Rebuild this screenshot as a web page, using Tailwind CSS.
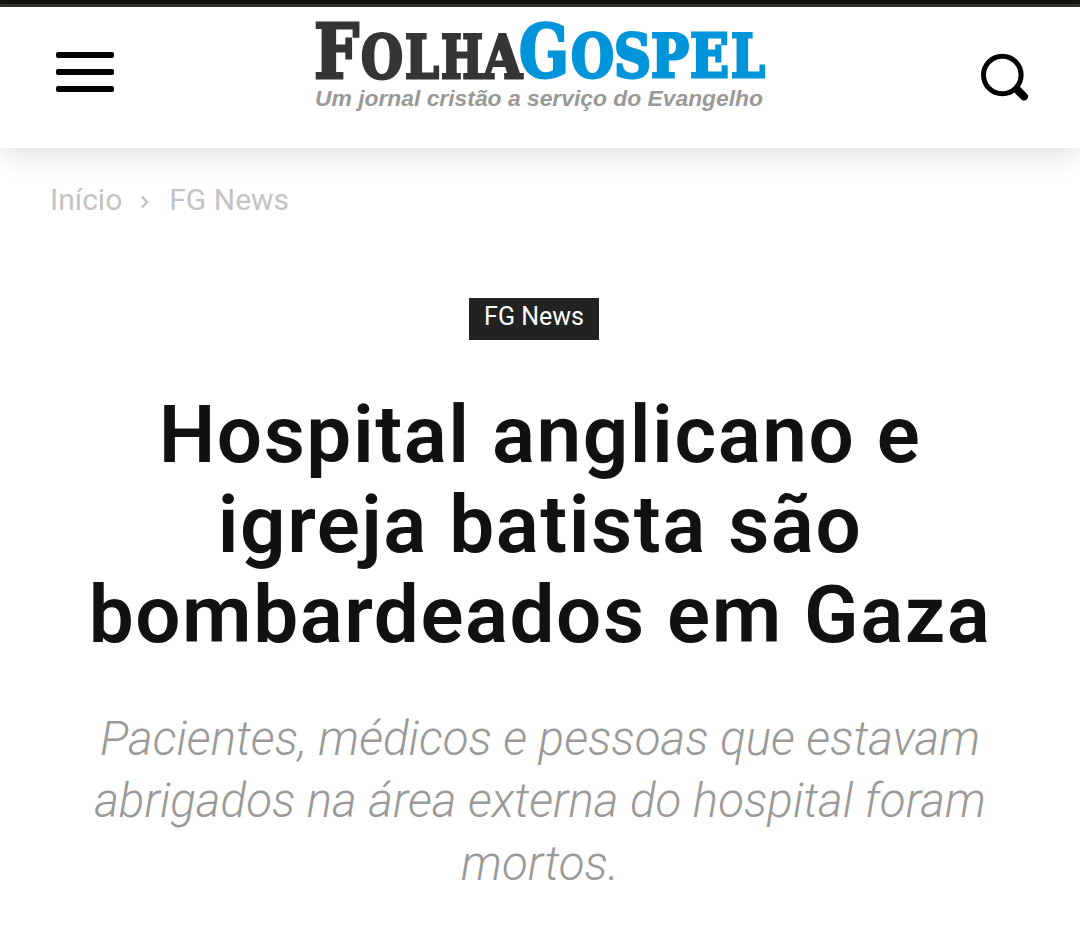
<!DOCTYPE html>
<html lang="pt-BR">
  <head>
    <meta charset="UTF-8" />
    <meta name="viewport" content="width=device-width, initial-scale=1.0" />
    <title>Folha Gospel</title>
    <script src="https://cdn.jsdelivr.net/npm/@tailwindcss/browser@4"></script>
  </head>
  <body class="min-h-screen overflow-hidden bg-white font-['Roboto',sans-serif]">
    <div class="h-[7px] border-b-3 border-[#33332b] bg-[#11150d]"></div>

    <header class="flex h-[141px] items-start justify-between bg-white pr-[51px] pl-14 shadow-[0_12px_24px_-2px_rgba(0,0,0,0.11)]">
      <button class="mt-[45px] flex h-10 w-[58px] flex-col justify-between" aria-label="Menu">
        <span class="h-[6px] w-full rounded-[2px] bg-black"></span>
        <span class="h-[6px] w-full rounded-[2px] bg-black"></span>
        <span class="h-[6px] w-full rounded-[2px] bg-black"></span>
      </button>

      <a href="#" class="-ml-[14px]" aria-label="Folha Gospel">
        <svg class="overflow-visible" width="460" height="110" viewBox="310 7 460 110">
          <g class="font-['DejaVu_Serif',serif] font-bold" fill="#373435" stroke="#373435" stroke-width="3">
            <text x="314" y="77.500" font-size="75" textLength="45" lengthAdjust="spacingAndGlyphs">F</text>
            <text y="77.500" font-size="60">
              <tspan x="361" textLength="42" lengthAdjust="spacingAndGlyphs">O</tspan>
              <tspan x="405" textLength="34" lengthAdjust="spacingAndGlyphs">L</tspan>
              <tspan x="441" textLength="42" lengthAdjust="spacingAndGlyphs">H</tspan>
              <tspan x="483" textLength="39" lengthAdjust="spacingAndGlyphs">A</tspan>
            </text>
          </g>
          <g class="font-['DejaVu_Serif',serif] font-bold" fill="#0095da" stroke="#0095da" stroke-width="3">
            <text x="519" y="77" font-size="73" textLength="50" lengthAdjust="spacingAndGlyphs">G</text>
            <text y="76.500" font-size="59">
              <tspan x="571" textLength="43" lengthAdjust="spacingAndGlyphs">O</tspan>
              <tspan x="614" textLength="37" lengthAdjust="spacingAndGlyphs">S</tspan>
              <tspan x="651" textLength="38" lengthAdjust="spacingAndGlyphs">P</tspan>
              <tspan x="690" textLength="39" lengthAdjust="spacingAndGlyphs">E</tspan>
              <tspan x="731" textLength="34" lengthAdjust="spacingAndGlyphs">L</tspan>
            </text>
          </g>
          <text x="315" y="105.500" font-size="22" textLength="448" lengthAdjust="spacingAndGlyphs" fill="#999" class="font-['Liberation_Sans',sans-serif] font-bold italic">Um jornal cristão a serviço do Evangelho</text>
        </svg>
      </a>

      <button class="mt-[46px]" aria-label="Buscar">
        <svg width="49" height="50" viewBox="980 53 49 50" fill="none" stroke="#000" stroke-linecap="round">
          <circle cx="1002.300" cy="75" r="18.800" stroke-width="5" />
          <path d="M1017.500 90l6.500 6.500" stroke-width="8" />
        </svg>
      </button>
    </header>

    <nav class="mt-[30px] flex h-[42px] items-center pl-[50px] text-[30px] text-[#c3c3c3]">
      <a href="#">Início</a>
      <svg class="mt-1.5 mr-[19px] ml-[18px]" width="10" height="14" viewBox="0 0 10 14" fill="none" stroke="currentColor" stroke-width="2.500">
        <path d="M2 1.500L7 7L2 12.500" />
      </svg>
      <span>FG News</span>
    </nav>

    <main class="text-center">
      <a href="#" class="mt-[78px] ml-[469px] flex h-[42px] w-[130px] justify-center bg-[#222] text-[25px] leading-[37px] text-white">FG News</a>
      <h1 class="mt-[50px] text-[80px] leading-[90px] font-semibold tracking-[1.55px] text-[#111]">
        Hospital anglicano e<br />igreja batista são<br />bombardeados em Gaza
      </h1>
      <p class="mt-[48px] text-[47.5px] leading-[62.400px] font-light text-[#999] italic">
        Pacientes, médicos e pessoas que estavam<br />abrigados na área externa do hospital foram<br />mortos.
      </p>
    </main>
  </body>
</html>
